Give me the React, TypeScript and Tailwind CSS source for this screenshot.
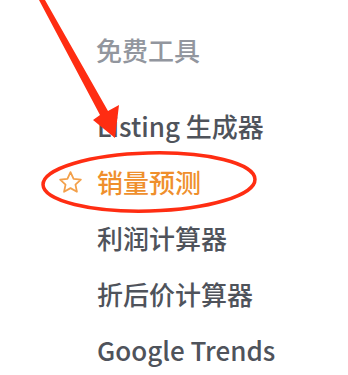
import React from "react";

const StarIcon = () => (
  <svg width="27" height="27" viewBox="0 0 24 24" fill="none" stroke="#f3a04a" strokeWidth="1.6" strokeLinejoin="round">
    <path d="M12 2.8l2.75 5.9 6.45.75-4.8 4.4 1.3 6.35L12 17l-5.7 3.2 1.3-6.35-4.8-4.4 6.45-.75z" />
  </svg>
);

const items: { label: string; active?: boolean }[] = [
  { label: "Listing 生成器" },
  { label: "销量预测", active: true },
  { label: "利润计算器" },
  { label: "折后价计算器" },
  { label: "Google Trends" },
];

export default function App() {
  return (
    <div
      className="relative w-[348px] h-[375px] bg-white overflow-hidden"
      style={{ fontFamily: '"Noto Sans CJK SC", "Noto Sans", sans-serif' }}
    >
      <div className="flex flex-col pt-[22px]">
        <div className="pl-[96px] h-[56px] leading-[56px] text-[26px] font-medium text-[#92969e]">免费工具</div>
        <div className="flex flex-col mt-[20px]">
          {items.map((it) => (
            <div key={it.label} className="flex items-center h-[56px]">
              <div className="w-[97px] flex justify-end pr-[13px]">{it.active ? <StarIcon /> : null}</div>
              <span
                className={
                  "text-[26px] leading-[56px] font-medium " +
                  (it.active ? "text-[#ef8f2c]" : "text-[#4f535b]")
                }
              >
                {it.label}
              </span>
            </div>
          ))}
        </div>
      </div>
      <svg className="absolute inset-0 pointer-events-none" width="348" height="375" viewBox="0 0 348 375">
        <polygon points="39,0 45,0 108,111 119,105 115,138 93,120 100,115" fill="#ff2d12" />
        <ellipse cx="149" cy="182" rx="106" ry="29" fill="none" stroke="#ff2d12" strokeWidth="3.5" transform="rotate(-1.5 149 182)" />
      </svg>
    </div>
  );
}
